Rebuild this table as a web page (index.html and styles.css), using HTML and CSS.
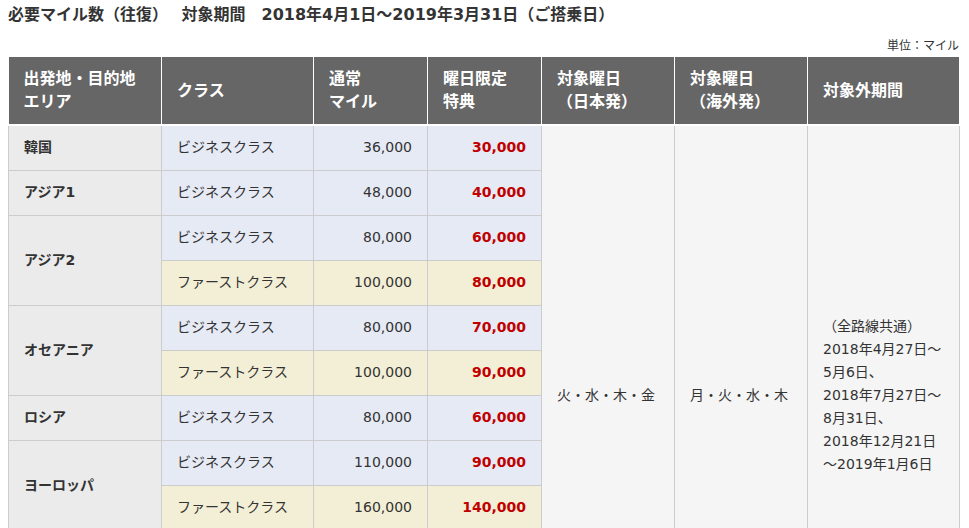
FILE: index.html
```html
<!DOCTYPE html>
<html lang="ja">
<head>
    <meta charset="UTF-8">
    <title>必要マイル数（往復）</title>
    <link rel="stylesheet" href="styles.css">
</head>
<body>
    <h2 class="title">必要マイル数（往復）　 対象期間　2018年4月1日～2019年3月31日（ご搭乗日）</h2>
    <p class="unit">単位：マイル</p>

    <table class="mile-table">
        <colgroup>
            <col class="w-area">
            <col class="w-class">
            <col class="w-num">
            <col class="w-num">
            <col class="w-day">
            <col class="w-day">
            <col class="w-period">
        </colgroup>
        <thead>
            <tr>
                <th>出発地・目的地<br>エリア</th>
                <th>クラス</th>
                <th>通常<br>マイル</th>
                <th>曜日限定<br>特典</th>
                <th>対象曜日<br>（日本発）</th>
                <th>対象曜日<br>（海外発）</th>
                <th>対象外期間</th>
            </tr>
        </thead>
        <tbody>
            <tr>
                <td class="area">韓国</td>
                <td class="biz">ビジネスクラス</td>
                <td class="biz num">36,000</td>
                <td class="biz num special">30,000</td>
                <td class="common" rowspan="12">火・水・木・金</td>
                <td class="common" rowspan="12">月・火・水・木</td>
                <td class="common period" rowspan="12">（全路線共通）<br>2018年4月27日～<br>5月6日、<br>2018年7月27日～<br>8月31日、<br>2018年12月21日<br>～2019年1月6日</td>
            </tr>
            <tr>
                <td class="area">アジア1</td>
                <td class="biz">ビジネスクラス</td>
                <td class="biz num">48,000</td>
                <td class="biz num special">40,000</td>
            </tr>
            <tr>
                <td class="area" rowspan="2">アジア2</td>
                <td class="biz">ビジネスクラス</td>
                <td class="biz num">80,000</td>
                <td class="biz num special">60,000</td>
            </tr>
            <tr>
                <td class="first">ファーストクラス</td>
                <td class="first num">100,000</td>
                <td class="first num special">80,000</td>
            </tr>
            <tr>
                <td class="area" rowspan="2">オセアニア</td>
                <td class="biz">ビジネスクラス</td>
                <td class="biz num">80,000</td>
                <td class="biz num special">70,000</td>
            </tr>
            <tr>
                <td class="first">ファーストクラス</td>
                <td class="first num">100,000</td>
                <td class="first num special">90,000</td>
            </tr>
            <tr>
                <td class="area">ロシア</td>
                <td class="biz">ビジネスクラス</td>
                <td class="biz num">80,000</td>
                <td class="biz num special">60,000</td>
            </tr>
            <tr>
                <td class="area" rowspan="2">ヨーロッパ</td>
                <td class="biz">ビジネスクラス</td>
                <td class="biz num">110,000</td>
                <td class="biz num special">90,000</td>
            </tr>
            <tr>
                <td class="first">ファーストクラス</td>
                <td class="first num">160,000</td>
                <td class="first num special">140,000</td>
            </tr>
            <tr>
                <td class="area" rowspan="2">北米</td>
                <td class="biz">ビジネスクラス</td>
                <td class="biz num">100,000</td>
                <td class="biz num special">80,000</td>
            </tr>
            <tr>
                <td class="first">ファーストクラス</td>
                <td class="first num">150,000</td>
                <td class="first num special">130,000</td>
            </tr>
            <tr>
                <td class="area">ハワイ</td>
                <td class="biz">ビジネスクラス</td>
                <td class="biz num">80,000</td>
                <td class="biz num special">60,000</td>
            </tr>
        </tbody>
    </table>
</body>
</html>
```

FILE: styles.css
```css
* {
    margin: 0;
    padding: 0;
    box-sizing: border-box;
}

html {
    overflow: hidden;
}

body {
    font-family: "DejaVu Sans", "Noto Sans CJK JP", sans-serif;
    color: #333;
    background: #fff;
    padding: 0 10px 0 8px;
}

.title {
    font-size: 16px;
    font-weight: bold;
    line-height: 22px;
    padding-top: 4px;
    color: #333;
}

.unit {
    text-align: right;
    font-size: 12px;
    line-height: 16px;
    margin-top: 12px;
    color: #333;
}

.mile-table {
    width: 951px;
    border-collapse: collapse;
    table-layout: fixed;
    margin-top: 3px;
}

.w-area { width: 153px; }
.w-class { width: 152px; }
.w-num { width: 114px; }
.w-day { width: 133px; }
.w-period { width: 152px; }

.mile-table th {
    background: #666;
    color: #fff;
    font-size: 16px;
    font-weight: bold;
    text-align: left;
    line-height: 23px;
    padding: 10px 15px 11px;
    height: 68px;
    border-left: 1px solid #fff;
    border-right: 1px solid #fff;
    border-bottom: 2px solid #fff;
}

.mile-table th:first-child {
    border-left: none;
}

.mile-table td {
    font-size: 14px;
    line-height: 23px;
    padding: 10px 15px;
    height: 45px;
    border: 1px solid #ccc;
    vertical-align: middle;
}

.area {
    background: #ebebeb;
    font-weight: bold;
}

.biz {
    background: #e6eaf4;
}

.first {
    background: #f3efd6;
}

.num {
    text-align: right;
    padding-right: 16px;
}

.special {
    color: #c00000;
    font-weight: bold;
}

.common {
    background: #f5f5f5;
}

.period {
    line-height: 23.3px;
}
```
